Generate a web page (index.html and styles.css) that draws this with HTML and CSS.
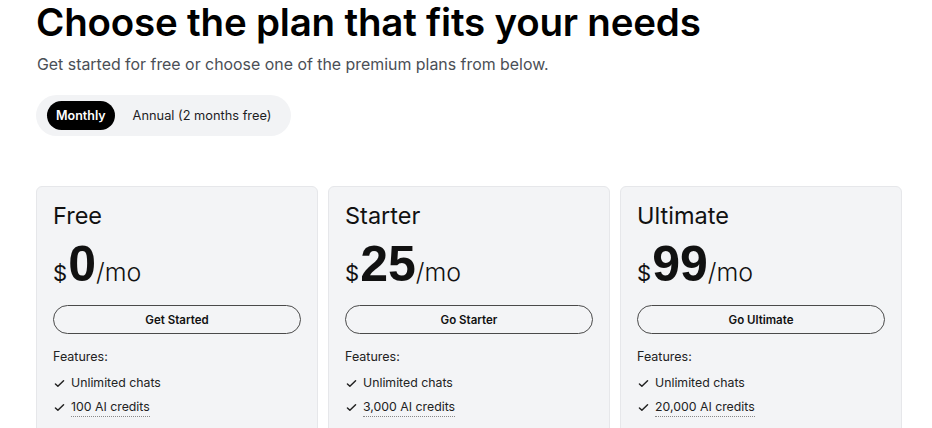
FILE: index.html
```html
<!DOCTYPE html>
<html lang="en">
<head>
<meta charset="utf-8">
<title>Pricing</title>
<link rel="stylesheet" href="styles.css">
</head>
<body>
<main class="page">
  <h1 class="title">Choose the plan that fits your needs</h1>
  <p class="subtitle">Get started for free or choose one of the premium plans from below.</p>
  <div class="toggle">
    <button class="toggle-btn active">Monthly</button>
    <button class="toggle-btn">Annual (2 months free)</button>
  </div>
  <section class="plans">
    <article class="card">
      <h2 class="plan-name">Free</h2>
      <div class="price"><span class="cur">$</span><span class="amount">0</span><span class="per">/mo</span></div>
      <button class="cta">Get Started</button>
      <p class="feat-title">Features:</p>
      <ul class="feats">
        <li><svg class="check" viewBox="0 0 16 16"><path d="M3 8.5l3 3 7-7" fill="none" stroke="currentColor" stroke-width="1.8" stroke-linecap="round" stroke-linejoin="round"/></svg><span>Unlimited chats</span></li>
        <li><svg class="check" viewBox="0 0 16 16"><path d="M3 8.5l3 3 7-7" fill="none" stroke="currentColor" stroke-width="1.8" stroke-linecap="round" stroke-linejoin="round"/></svg><span class="dotted">100 AI credits</span></li>
      </ul>
    </article>
    <article class="card">
      <h2 class="plan-name">Starter</h2>
      <div class="price"><span class="cur">$</span><span class="amount">25</span><span class="per">/mo</span></div>
      <button class="cta">Go Starter</button>
      <p class="feat-title">Features:</p>
      <ul class="feats">
        <li><svg class="check" viewBox="0 0 16 16"><path d="M3 8.5l3 3 7-7" fill="none" stroke="currentColor" stroke-width="1.8" stroke-linecap="round" stroke-linejoin="round"/></svg><span>Unlimited chats</span></li>
        <li><svg class="check" viewBox="0 0 16 16"><path d="M3 8.5l3 3 7-7" fill="none" stroke="currentColor" stroke-width="1.8" stroke-linecap="round" stroke-linejoin="round"/></svg><span class="dotted">3,000 AI credits</span></li>
      </ul>
    </article>
    <article class="card">
      <h2 class="plan-name">Ultimate</h2>
      <div class="price"><span class="cur">$</span><span class="amount">99</span><span class="per">/mo</span></div>
      <button class="cta">Go Ultimate</button>
      <p class="feat-title">Features:</p>
      <ul class="feats">
        <li><svg class="check" viewBox="0 0 16 16"><path d="M3 8.5l3 3 7-7" fill="none" stroke="currentColor" stroke-width="1.8" stroke-linecap="round" stroke-linejoin="round"/></svg><span>Unlimited chats</span></li>
        <li><svg class="check" viewBox="0 0 16 16"><path d="M3 8.5l3 3 7-7" fill="none" stroke="currentColor" stroke-width="1.8" stroke-linecap="round" stroke-linejoin="round"/></svg><span class="dotted">20,000 AI credits</span></li>
      </ul>
    </article>
  </section>
</main>
</body>
</html>
```
FILE: styles.css
```css
* { box-sizing: border-box; }
html, body { margin: 0; padding: 0; background: #ffffff; }
body {
  font-family: Inter, "Open Sans", "Liberation Sans", sans-serif;
  color: #111111;
  overflow: hidden;
}
.page {
  width: 866px;
  margin-left: 36px;
}
.title {
  margin: 0;
  padding-top: 2px;
  font-size: 38.5px;
  line-height: 40px;
  font-weight: 600;
  letter-spacing: -0.2px;
  color: #000;
}
.subtitle {
  margin: 12px 0 0 1px;
  font-size: 15.9px;
  line-height: 22px;
  color: #4b4f56;
}
.toggle {
  margin-top: 19px;
  display: inline-flex;
  align-items: center;
  gap: 7px;
  background: #f2f3f5;
  border-radius: 999px;
  padding: 6px 9px 6px 11px;
  height: 41px;
}
.toggle-btn {
  font-family: inherit;
  font-size: 12.8px;
  border: 0;
  background: transparent;
  color: #1d1d1f;
  padding: 0 11px;
  height: 29px;
  border-radius: 999px;
  line-height: 29px;
}
.toggle-btn.active {
  background: #000;
  color: #fff;
  font-weight: 600;
  font-size: 12.5px;
  padding: 0 9px;
}
.plans {
  margin-top: 50px;
  display: grid;
  grid-template-columns: repeat(3, 1fr);
  gap: 10px;
}
.card {
  background: #f3f4f6;
  border: 1px solid #e6e7ea;
  border-radius: 6px;
  padding: 16px 16px 24px;
  height: 280px;
}
.plan-name {
  margin: 0;
  font-size: 23.5px;
  line-height: 26px;
  font-weight: 400;
  color: #111;
}
.price {
  margin-top: 9px;
  display: flex;
  align-items: baseline;
  height: 52px;
}
.cur { font-size: 22px; }
.amount {
  font-family: "Liberation Sans", Arial, sans-serif;
  font-weight: 700;
  font-size: 50px;
  line-height: 52px;
  margin-left: 1px;
}
.per { font-size: 25px; font-weight: 300; }
.cta {
  margin-top: 15px;
  width: 100%;
  height: 29px;
  border: 1.5px solid #4a4a4a;
  border-radius: 999px;
  background: transparent;
  font-family: inherit;
  font-size: 11.5px;
  font-weight: 600;
  color: #111;
}
.feat-title {
  margin: 14px 0 0;
  font-size: 12.5px;
  line-height: 18px;
  color: #222;
}
.feats {
  list-style: none;
  margin: 8px 0 0;
  padding: 0;
  display: flex;
  flex-direction: column;
  gap: 6px;
}
.feats li {
  display: flex;
  align-items: center;
  gap: 5px;
  font-size: 12.3px;
  line-height: 18px;
  color: #222;
}
.check { width: 13px; height: 13px; color: #222; flex: none; }
.dotted { border-bottom: 1px dotted #888; }
```
